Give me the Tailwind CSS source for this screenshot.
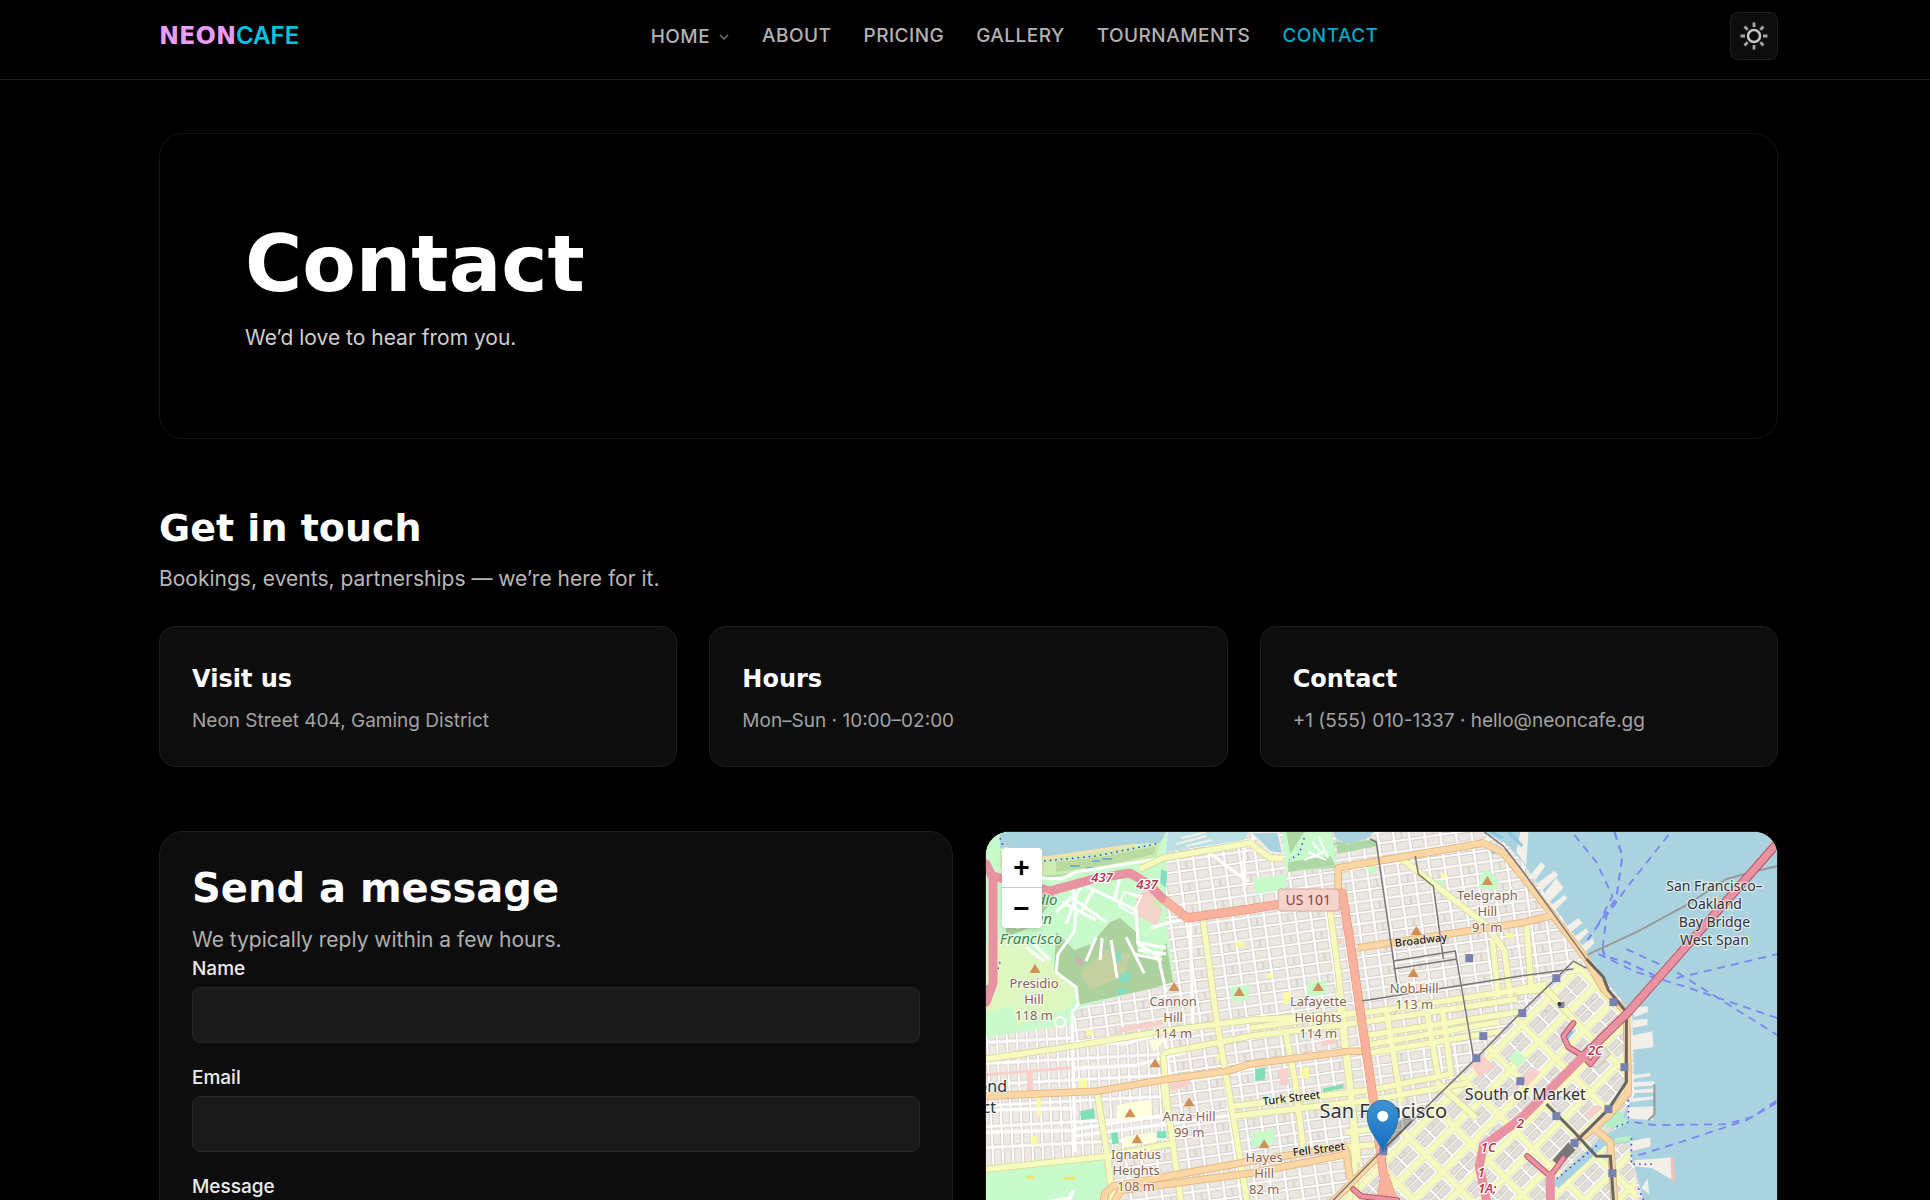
<!DOCTYPE html>
<html lang="en">
<head>
    <meta charset="UTF-8">
    <meta name="viewport" content="width=device-width, initial-scale=1.0">
    <title>Contact | NeonCafe</title>
    <script src="https://cdn.jsdelivr.net/npm/@tailwindcss/browser@4"></script>
</head>
<body class="bg-black text-white font-['Inter',sans-serif]">
    <header class="border-b border-[#1c1c1c]">
        <div class="flex items-center justify-between pl-[159px] pr-[152px] pt-3 pb-[19px]">
            <a href="#" class="flex items-baseline text-2xl leading-8 font-bold">
                <span class="font-['DejaVu_Sans',sans-serif] text-[#e99bf5]">NEON</span><span class="text-[#00c3e3] font-semibold">CAFE</span>
            </a>
            <nav class="flex items-center gap-8 text-[19px] leading-7 font-medium tracking-wide text-[#b3b3b3]">
                <a href="#" class="flex items-center gap-2 pt-[2px]">HOME
                    <svg class="w-3 h-3 text-[#777]" viewBox="0 0 12 12" fill="none" stroke="currentColor" stroke-width="1.5"><path d="M2 4l4 4 4-4"/></svg>
                </a>
                <a href="#">ABOUT</a>
                <a href="#">PRICING</a>
                <a href="#">GALLERY</a>
                <a href="#">TOURNAMENTS</a>
                <a href="#" class="text-[#00a9c4]">CONTACT</a>
            </nav>
            <button type="button" aria-label="Toggle theme" class="w-12 h-12 flex items-center justify-center rounded-lg border border-[#1f1f1f] bg-[#0d0d0d] text-[#c4c4c4]">
                <svg class="w-[30px] h-[30px]" viewBox="0 0 30 30" fill="none" stroke="currentColor" stroke-width="2.5">
                    <circle cx="15" cy="15" r="6"/>
                    <path stroke="#a8a8a8" stroke-width="2.8" d="M15 1.500v4.500M15 24v4.500M1.500 15h4.500M24 15h4.500M5.500 5.500l3.200 3.200M21.300 21.300l3.200 3.200M5.500 24.500l3.200-3.200M21.300 8.700l3.200-3.200"/>
                </svg>
            </button>
        </div>
    </header>

    <main class="pl-[159px] pr-[152px] pt-[53px] pb-20">
        <section class="rounded-3xl border border-[#141414] px-[85px] pt-[90px] pb-[84px]">
            <h1 class="font-['DejaVu_Sans',sans-serif] font-bold text-[78px] leading-[80px]">Contact</h1>
            <p class="mt-[18px] text-[21px] leading-8 text-[#cfcfcf]">We’d love to hear from you.</p>
        </section>

        <section class="mt-[65px]">
            <h2 class="font-['DejaVu_Sans',sans-serif] font-bold text-[38px] leading-[48px]">Get in touch</h2>
            <p class="mt-[11px] text-[21px] leading-8 text-[#b8b8b8]">Bookings, events, partnerships — we’re here for it.</p>
            <div class="mt-[31px] grid grid-cols-3 gap-8">
                <div class="rounded-2xl border border-[#1c1c1c] bg-[#0d0d0d] px-8 pt-8 pb-[31px]">
                    <h3 class="font-['DejaVu_Sans',sans-serif] font-bold text-2xl leading-10">Visit us</h3>
                    <p class="mt-2 text-[19px] leading-7 text-[#a3a3a3]">Neon Street 404, Gaming District</p>
                </div>
                <div class="rounded-2xl border border-[#1c1c1c] bg-[#0d0d0d] px-8 pt-8 pb-[31px]">
                    <h3 class="font-['DejaVu_Sans',sans-serif] font-bold text-2xl leading-10">Hours</h3>
                    <p class="mt-2 text-[19px] leading-7 text-[#a3a3a3]">Mon–Sun · 10:00–02:00</p>
                </div>
                <div class="rounded-2xl border border-[#1c1c1c] bg-[#0d0d0d] px-8 pt-8 pb-[31px]">
                    <h3 class="font-['DejaVu_Sans',sans-serif] font-bold text-2xl leading-10">Contact</h3>
                    <p class="mt-2 text-[19px] leading-7 text-[#a3a3a3]">+1 (555) 010-1337 · hello@neoncafe.gg</p>
                </div>
            </div>
        </section>

        <section class="mt-16 grid grid-cols-2 gap-8">
            <div class="rounded-3xl border border-[#1c1c1c] bg-[#0d0d0d] p-8">
                <h2 class="font-['DejaVu_Sans',sans-serif] font-bold text-[40px] leading-[48px]">Send a message</h2>
                <p class="mt-3 text-[21px] leading-8 text-[#b0b0b0]">We typically reply within a few hours.</p>
                <form class="flex flex-col gap-[22px] text-[19px] leading-[25px] font-medium text-[#ededed]">
                    <div>
                        <label for="name" class="block">Name</label>
                        <input id="name" type="text" class="mt-[6px] block w-full h-14 px-4 rounded-lg border border-[#262626] bg-[#1a1a1a]">
                    </div>
                    <div>
                        <label for="email" class="block">Email</label>
                        <input id="email" type="email" class="mt-[6px] block w-full h-14 px-4 rounded-lg border border-[#262626] bg-[#1a1a1a]">
                    </div>
                    <div>
                        <label for="message" class="block">Message</label>
                        <textarea id="message" rows="5" class="mt-[6px] block w-full px-4 py-3 rounded-lg border border-[#262626] bg-[#1a1a1a]"></textarea>
                    </div>
                    <button type="submit" class="h-14 rounded-lg bg-[#00c3e3] text-black">Send</button>
                </form>
            </div>

            <!-- Map -->
            <div class="relative self-start h-[600px] rounded-3xl border border-[#1c1c1c] overflow-hidden bg-[#f2efe9]">
                <svg class="block w-full h-full font-['Noto_Sans',sans-serif]" viewBox="0 0 791 598" preserveAspectRatio="xMidYMin slice">
                    <defs>
                        <pattern id="west" width="10" height="21" patternUnits="userSpaceOnUse" patternTransform="rotate(-3)">
                            <rect width="10" height="21" fill="#fff"/>
                            <rect x="1.5" y="2" width="7" height="17" fill="#eeeae3" stroke="#d0cbc5" stroke-width=".8"/>
                        </pattern>
                        <pattern id="north" width="31" height="22" patternUnits="userSpaceOnUse" patternTransform="rotate(-8)">
                            <rect width="31" height="22" fill="#fff"/>
                            <g fill="#ece7e0" stroke="#cdc7c1" stroke-width=".8">
                                <rect x="1.5" y="1.5" width="12" height="8"/><rect x="17" y="1.5" width="12" height="8"/>
                                <rect x="1.5" y="12.5" width="6" height="8"/><rect x="8.5" y="12.5" width="5" height="8"/><rect x="17" y="12.5" width="12" height="8"/>
                            </g>
                        </pattern>
                        <pattern id="soma" width="40" height="24" patternUnits="userSpaceOnUse" patternTransform="translate(4 6) rotate(-45)">
                            <rect width="40" height="24" fill="#fff"/>
                            <g fill="#e3ded8" stroke="#c9c3bd" stroke-width=".8">
                                <rect x="9" y="9" width="12" height="5"/><rect x="9" y="16" width="12" height="6"/>
                                <rect x="24" y="9" width="6" height="5"/><rect x="31" y="9" width="7" height="5"/><rect x="24" y="16" width="14" height="6"/>
                            </g>
                            <path d="M0 4H40M4 0V24" stroke="#d9dba0" stroke-width="7"/>
                            <path d="M0 4H40M4 0V24" stroke="#f7fabf" stroke-width="5.500"/>
                        </pattern>
                        <path id="peak" d="M0-5L5.500 4h-11z" fill="#d08f55"/>
                        <rect id="stop" x="-4" y="-4" width="8" height="8" fill="#7981b0"/>
                        <linearGradient id="pin" x1="0" y1="0" x2="0" y2="1"><stop offset="0" stop-color="#4192cf"/><stop offset="1" stop-color="#126fc6"/></linearGradient>
                    </defs>

                    <!-- street grids -->
                    <rect width="791" height="598" fill="url(#north)"/>
                    <path d="M0 200L87 192 88 330 0 340zM87 215L177 205 181 320 87 325z" fill="url(#west)"/>
                    <path d="M397 319L590 127 645 180V300L670 598H330L347 368z" fill="url(#soma)"/>

                    <!-- coloured lots -->
                    <g fill="#f9cfcb">
                        <path d="M132 196l44-8v5l-44 8zM0 241l86-7v3l-86 7zM41 240h6v24h-6zM182 252l22-6v6l-18 7zM294 236h8v17h-8zM356 92l7 12v5l-7-12zM484 232l13-9 11 12-15 10zM346 106h9v6h-9zM335 209l14-3v5l-14 3zM536 245l12-10 6 6-14 14zM600 280l12-8 4 4-14 13z"/>
                    </g>
                    <g fill="#fbfba2">
                        <path d="M100 198h7v5h-7zM51 264h4v20h-4zM93 247h8v8h-8zM249 110h9v5h-9zM280 142h7v4h-7zM297 160h7v12h-7zM315 236l8-2v12h-8zM231 222h8v6h-8zM46 304h5v9h-5zM455 41h5v5h-5zM520 101h7v5h-7z"/>
                    </g>
                    <path d="M131 273l34-6 1 17-35 5zM137 305l33-5v10l-33 5zM163 208l17-2-12 14z" fill="#ffffe0"/>
                    <g fill="#7fe0b8">
                        <path d="M94 279l14-3 1 10-14 2zM125 301l6-2 2 12-7 1zM171 299h9v7h-9zM269 237l10-2v12l-10 2zM337 256l20-4v4l-20 4z"/>
                    </g>
                    <path d="M244 156l19-4v16l-18 2zM321 151l19-3v14l-19 3zM265 301l23-4 1 15-24 3zM495 42l6-5 12 11-3 10-18-2zM267 47l33-5v15l-31 5zM447 48h11v6h-11zM380 33l9-2 2 10-8 1zM522 226l9-8 9 9-9 8z" fill="#c8facc"/>

                    <!-- Presidio and coast parks -->
                    <path d="M0 0H180V85L188 150 120 168 92 176 85 192 0 205z" fill="#c8facc"/>
                    <path d="M0 110L30 105 65 130 90 160 84 176 0 204z" fill="#def6c0"/>
                    <path d="M0 180l26-6 4 20-30 9z" fill="#c8facc"/>
                    <path d="M70 100L88 118 105 112 124 90 134 86 150 100 152 120 175 128 180 110 187 150 168 156 92 173 92 158 68 140zM14 60H40L20 70V105L45 95 70 65 62 58zM50 36L90 30 100 40 60 46z" fill="#add19e"/>
                    <path d="M95 140l25-22 25 4-8 22-34 14z" fill="#c5d0a0"/>
                    <path d="M14 18L60 25 174 12 170 26 100 40 60 44 14 36z" fill="#cdebb0"/>
                    <path d="M70 30l50-6 50-10-2 8-50 12-48 6z" fill="#b9dba2"/>
                    <path d="M150 65l18-14 8 26-4 17-23-11z" fill="#f3d4cc"/>
                    <path d="M168 61l6 4 1 12-8-4z" fill="#cdebb0"/>
                    <path d="M134 142l10-2v9l-10 2zM131 157l10-2v6l-10 2zM130 120h5v10h-5zM175 37l6 3-1 16-6-5z" fill="#85dcc0"/>
                    <path d="M90 124l8 4-3 7-7-5z" fill="#c4b6ac"/>
                    <path d="M14 0H180L174 11 150 12 120 16 60 26 14 16z" fill="#aad3df"/>
                    <path d="M18 16L60 26 100 20 150 13" fill="none" stroke="#f2e2ae" stroke-width="3"/>
                    <path d="M182 0H262L258 8 200 17 180 20z" fill="#bddfe6"/>
                    <path d="M190 12l30-8M200 14l26-6M195 6l25-6M264 0H292L297 22 284 20z" stroke="#f2efe9" stroke-width="2" fill="#aad3df"/>
                    <g fill="none" stroke="#b5d6b0" stroke-width="3"><path d="M300 38L351 34M347 12L390 9"/></g>
                    <path d="M296 0H345L351 33 300 41z" fill="#c8facc"/>
                    <path d="M302 30l42-6 5 9-47 7zM300 0h18l-14 22z" fill="#add8a5"/>
                    <path d="M326 10l10 12M332 4l10 22M322 20l18 8M318 28l20-8" stroke="#fff" stroke-width="2"/>
                    <path d="M347 0H388L380 7 360 11 350 7z" fill="#aad3df"/>
                    <path d="M350 9l10 4 24-5 6 0 1 6-40 8z" fill="#add8a5"/>
                    <g fill="none" stroke="#4545ee" stroke-width="1.600" stroke-dasharray="1.600 4">
                        <path d="M58 29L110 24 174 11M14 6l4 10M318 6l-5 16-10 6M14 130L8 150 0 155M90 337l20-6 8 16-12 14"/>
                    </g>
                    <path d="M84 34h10M100 36h8M116 27h10M106 29h8" stroke="#5ba6dd" stroke-width="1.500"/>
                    <g fill="none" stroke="#fff" stroke-width="3">
                        <path d="M50 46L75 47 90 40 177 26M86 55L90 80 88 100 72 122 70 140 90 155 92 172 86 180 89 320"/>
                        <path d="M100 54L150 78 152 112 172 124 180 160M92 60L80 92M76 70L110 88M86 66L120 90M95 56L70 80M108 56L95 80M134 45l-6 24M165 96L185 90 264 76M152 118l28 4M150 110l30 6M148 122l28 6M140 105l18 36M125 108l6 38M110 105l-10 24M116 106l-2 22M40 115l18 14M48 112l16 16"/>
                        <path d="M85 211H90L140 211 177 201M88 236L150 233 200 220M88 262l180-26M88 297l90-14M88 304l180-24M0 300L88 298M0 278L88 276M178 200L184 245M204 84L207 200M222 20L262 50M258 15V60"/>
                        <circle cx="74" cy="190" r="5" stroke-width="2"/>
                        <path d="M142 61l10 4M138 60l-5 14 14 8 8-18z" stroke-width="2"/>
                    </g>
                    <path d="M0 340L117 326 124 368 130 598H0z" fill="#c8facc"/>
                    <path d="M78 346h12M40 345h8" stroke="#e8e86a" stroke-width="3"/>
                    <path d="M62 370l22-4 3-8" fill="none" stroke="#fff" stroke-width="4"/>

                    <!-- secondary roads -->
                    <g fill="none" stroke="#d6d79a" stroke-width="7" stroke-linejoin="round">
                        <path d="M0 227L87 214 177 199 264 188 377 181 511 161 560 152M177 221L264 204 377 190 531 167M217 89L231 191 247 284 261 370M177 221L181 271 195 370M111 261L121 321 127 370M154 37L177 26 264 11 284 26H297M0 337L121 324 187 311M247 274L384 258 464 242M247 284L384 268 480 251"/>
                        <path d="M344 80L352 140 366 270 372 330M299 198L309 250 317 315M352 160L365 270M400 178L415 270M440 175L452 245M456 175L465 245M376 222L515 199M380 213L512 190M376 204L531 180M414 26L440 46 500 93 518 118 524 165M506 108L512 165M540 90L545 160M530 160L560 157 590 190M366 270L370 370M382 290L400 289M360 300L384 297M360 315L392 312M450 250L490 286M177 250L180 275M264 196L380 179"/>
                    </g>
                    <g fill="none" stroke="#f7fabf" stroke-width="5.500" stroke-linejoin="round">
                        <path d="M0 227L87 214 177 199 264 188 377 181 511 161 560 152M177 221L264 204 377 190 531 167M217 89L231 191 247 284 261 370M177 221L181 271 195 370M111 261L121 321 127 370M154 37L177 26 264 11 284 26H297M0 337L121 324 187 311M247 274L384 258 464 242M247 284L384 268 480 251"/>
                        <path d="M344 80L352 140 366 270 372 330M299 198L309 250 317 315M352 160L365 270M400 178L415 270M440 175L452 245M456 175L465 245M376 222L515 199M380 213L512 190M376 204L531 180M414 26L440 46 500 93 518 118 524 165M506 108L512 165M540 90L545 160M530 160L560 157 590 190M366 270L370 370M382 290L400 289M360 300L384 297M360 315L392 312M450 250L490 286M177 250L180 275M264 196L380 179"/>
                    </g>

                    <!-- bay -->
                    <path d="M499 0H791V598H700L657 368 644 320V304L632 292 648 262 646 182 622 152 600 120 536 30 520 12z" fill="#aad3df"/>
                    <path d="M566 350L612 308 618 314 572 356zM610 308l24-14 10 6v10l-26 4z" fill="#aad3df"/>
                    <g fill="#f2efe9">
                        <path d="M534 0h8l-2 34-10-14zM543 44l12-14 4 4-10 14zM550 52l18-13 4 4-16 15zM556 64l14-18 7 10-16 16zM564 74l14-11 3 3-14 14zM578 96l14-10 4 5-14 11zM586 106l14-10 2 4-12 12zM592 116l14-10 2 5-12 12z"/>
                        <path d="M645 176l16-2 1 6-14 5zM646 188l15-1v6l-15 3zM642 204l24-5 1 16-26 3zM644 243l20-2v3l-20 3zM644 250l24-1v4l-24 2zM644 258l24-2v4l-24 1zM643 266l24-2v3l-24 3zM642 275l26-1-2 14-26-2zM644 309l20-4v9l-19 5zM648 328l38-3 2 24-22-13-18-2zM655 356l6-10 2 16z"/>
                    </g>
                    <path d="M684 325h3l2 24-4-1z" fill="#f3c0bb"/>
                    <path d="M668 252v30l-6 6" fill="none" stroke="#999" stroke-width="2"/>
                    <path d="M618 288l14-10 10 12-10 6-16-2zM628 306l16-3v6l-16 2z" fill="#b4efc9"/>
                    <path d="M600 214l12-6 12 14-14 14-10-6z" fill="#e3deda" stroke="#c9c3bd"/>
                    <path d="M586 199l-8 12M500 10l8 12M506 0l10 6M522 0l14 14" stroke="#8cc6e0" stroke-width="3"/>
                    <g fill="none" stroke="#7b86f0" stroke-width="1.800" stroke-dasharray="8 6">
                        <path d="M588 3L610 30 626 64 608 100M682 3L640 56 620 84 616 118M612 122L650 140 700 155 791 186M640 117L690 140 791 203M690 146L791 122"/>
                        <path d="M628 0L636 24 630 66 614 90 601 108M616 116L618 124 640 130 674 146" stroke-width="2.200"/>
                        <path d="M648 290L668 293 740 292 765 285 791 268M652 323L700 308 760 288 791 270"/>
                    </g>
                    <path d="M642 262V290L626 296M645 306V332H668M566 350L612 312M652 356l6 14" fill="none" stroke="#4545ee" stroke-width="1.600" stroke-dasharray="1.600 4"/>
                    <path d="M598 124L650 100 700 73 740 47 770 39 791 34" fill="none" stroke="#999" stroke-width="2"/>

                    <!-- primary roads -->
                    <g fill="none" stroke="#dfb27a" stroke-width="7.500" stroke-linejoin="round">
                        <path d="M0 264L111 259 181 247 241 239 264 232 364 219H379M117 372L119 361 127 354 264 329 361 314M127 372L135 358 264 341 361 322M359 314L364 347M352 60V36L497 11 517 21 536 44 600 127 617 157 640 180 642 260 622 284 588 311M371 116L397 112 534 91 564 84M340 376L397 319M608 296L624 310 628 368V598"/>
                    </g>
                    <g fill="none" stroke="#fcd6a4" stroke-width="6" stroke-linejoin="round">
                        <path d="M0 264L111 259 181 247 241 239 264 232 364 219H379M117 372L119 361 127 354 264 329 361 314M127 372L135 358 264 341 361 322M359 314L364 347M352 60V36L497 11 517 21 536 44 600 127 617 157 640 180 642 260 622 284 588 311M371 116L397 112 534 91 564 84M340 376L397 319M608 296L624 310 628 368V598"/>
                    </g>
                    <g fill="none" stroke-linejoin="round">
                        <path d="M176 66L201 86 264 77 294 72 356 61 364 111 387 267 397 341 407 368 430 598M399 341L394 372" stroke="#e98c75" stroke-width="9"/>
                        <path d="M176 66L201 86 264 77 294 72 356 61 364 111 387 267 397 341 407 368 430 598M399 341L394 372" stroke="#f9b29c" stroke-width="8"/>
                    </g>

                    <!-- rail and cable car lines -->
                    <g fill="none" stroke="#777" stroke-width="1.500">
                        <path d="M384 7L390 10 411 154M429 24L432 42 447 54 457 127M407 129L469 119 487 224M407 137L471 127M376 169L534 144 587 137M345 370L397 317 490 226 534 181 570 146 587 129 600 136M498 0L517 14 534 36 600 127"/>
                        <path d="M600 127L617 145 622 158 640 180 640 250 622 277 588 311M560 272L588 300 610 324H624L627 368V420" stroke="#666" stroke-width="3"/>
                    </g>
                    <path d="M566 328l16-18 7 8-16 16z" fill="#777"/>

                    <!-- motorways -->
                    <g fill="none" stroke="#b8556c" stroke-linejoin="round" stroke-linecap="round">
                        <path d="M791 11L641 181 597 224" stroke-width="9"/>
                        <path d="M587 191L577 204 582 215 597 224 604 232 612 222M541 324L564 344V370M564 344L577 326M367 357L375 364 411 368" stroke-width="6"/>
                    </g>
                    <g fill="none" stroke="#e892a2" stroke-linejoin="round" stroke-linecap="round">
                        <path d="M791 11L641 181 597 224" stroke-width="7"/>
                        <path d="M0 32L7 46V151L0 170M7 44L64 59 111 46 144 41 161 51 176 66M597 224L534 287 497 314 493 334 501 372M564 344V372" stroke-width="9"/>
                        <path d="M587 191L577 204 582 215 597 224 604 232 612 222M541 324L564 344V370M564 344L577 326M367 357L375 364 411 368" stroke-width="4"/>
                    </g>

                    <g>
                        <use href="#stop" x="483" y="126"/><use href="#stop" x="497" y="204"/><use href="#stop" x="490" y="226"/><use href="#stop" x="397" y="319"/>
                        <use href="#stop" x="536" y="181"/><use href="#stop" x="570" y="146"/><use href="#stop" x="627" y="170"/><use href="#stop" x="638" y="235"/>
                        <use href="#stop" x="622" y="277"/><use href="#stop" x="570" y="284"/><use href="#stop" x="588" y="311"/><use href="#stop" x="534" y="249"/>
                        <use href="#stop" x="626" y="341"/><rect x="572" y="170" width="6" height="6" fill="#7981b0"/><circle cx="573" cy="172" r="2" fill="#333"/>
                    </g>
                    <g>
                        <use href="#peak" x="49" y="137"/><use href="#peak" x="188" y="155"/><use href="#peak" x="253" y="160"/><use href="#peak" x="169" y="231"/>
                        <use href="#peak" x="203" y="270"/><use href="#peak" x="144" y="281"/><use href="#peak" x="151" y="307"/><use href="#peak" x="501" y="49"/>
                        <use href="#peak" x="430" y="99"/><use href="#peak" x="427" y="141"/><use href="#peak" x="332" y="155"/><use href="#peak" x="278" y="312"/>
                    </g>

                    <!-- labels -->
                    <g text-anchor="middle" font-size="13" fill="#8a6450" stroke="#fff" stroke-opacity=".7" stroke-width="2.500" paint-order="stroke">
                        <text x="48" y="156">Presidio</text><text x="48" y="172">Hill</text><text x="48" y="188">118 m</text>
                        <text x="187" y="174">Cannon</text><text x="187" y="190">Hill</text><text x="187" y="206">114 m</text>
                        <text x="203" y="289">Anza Hill</text><text x="203" y="305">99 m</text>
                        <text x="150" y="327">Ignatius</text><text x="150" y="343">Heights</text><text x="150" y="359">108 m</text>
                        <text x="332" y="174">Lafayette</text><text x="332" y="190">Heights</text><text x="332" y="206">114 m</text>
                        <text x="428" y="161">Nob Hill</text><text x="428" y="177">113 m</text>
                        <text x="501" y="68">Telegraph</text><text x="501" y="84">Hill</text><text x="501" y="100">91 m</text>
                        <text x="278" y="330">Hayes</text><text x="278" y="346">Hill</text><text x="278" y="362">82 m</text>
                    </g>
                    <g text-anchor="middle" font-size="15" font-style="italic" fill="#2f8a50" stroke="#fff" stroke-opacity=".6" stroke-width="2.500" paint-order="stroke">
                        <text x="45" y="73">Presidio</text><text x="45" y="92">of San</text><text x="45" y="112">Francisco</text>
                    </g>
                    <g text-anchor="middle" font-size="14" fill="#333" stroke="#fff" stroke-opacity=".6" stroke-width="2.500" paint-order="stroke">
                        <text x="728" y="59">San Francisco–</text><text x="728" y="77">Oakland</text><text x="728" y="95">Bay Bridge</text><text x="728" y="113">West Span</text>
                        <text x="397" y="286" font-size="20">San Francisco</text>
                        <text x="539" y="268" font-size="16">South of Market</text>
                        <text x="21" y="260" font-size="16" text-anchor="end">Richmond</text><text x="10" y="281" font-size="16" text-anchor="end">District</text>
                    </g>
                    <g font-size="11" font-weight="500" fill="#222" stroke="#fff" stroke-opacity=".4" stroke-width="2" paint-order="stroke">
                        <text transform="translate(409 115) rotate(-7)">Broadway</text>
                        <text transform="translate(277 273) rotate(-7)">Turk Street</text>
                        <text transform="translate(307 324) rotate(-7)">Fell Street</text>
                    </g>
                    <g text-anchor="middle" font-size="13" font-style="italic" font-weight="600" fill="#b5374d" stroke="#fff" stroke-width="2.500" paint-order="stroke">
                        <text x="116" y="50">437</text><text x="161" y="57">437</text><text x="609" y="223">2C</text><text x="534" y="296">2</text>
                        <text x="502" y="320">1C</text><text x="495" y="345">1</text><text x="501" y="361">1A;</text>
                    </g>
                    <rect x="292" y="57" width="61" height="22" rx="3" fill="#f5d4ce" stroke="#d9a79b"/>
                    <text x="322" y="73" text-anchor="middle" font-size="14" fill="#8b4038">US 101</text>

                    <!-- marker -->
                    <path d="M398 320l26-28c4-5 0-10-6-8l-14 14z" fill="#000" opacity=".25"/>
                    <path d="M396.500 319.500C392 306 381 299 381 284c0-9 7-16 15.500-16s15.500 7 15.500 16c0 15-11 22-15.500 35.500z" fill="url(#pin)" stroke="#2a75ad"/>
                    <circle cx="396.500" cy="284" r="5.500" fill="#fff"/>
                </svg>
                <div class="absolute left-4 top-4 w-10 flex flex-col rounded-sm bg-white shadow-md text-black font-['Liberation_Sans',sans-serif] font-bold text-[28px] leading-[39px] text-center">
                    <button type="button" aria-label="Zoom in" class="h-10 border-b border-[#ccc]">+</button>
                    <button type="button" aria-label="Zoom out" class="h-10">−</button>
                </div>
            </div>
        </section>
    </main>
</body>
</html>
